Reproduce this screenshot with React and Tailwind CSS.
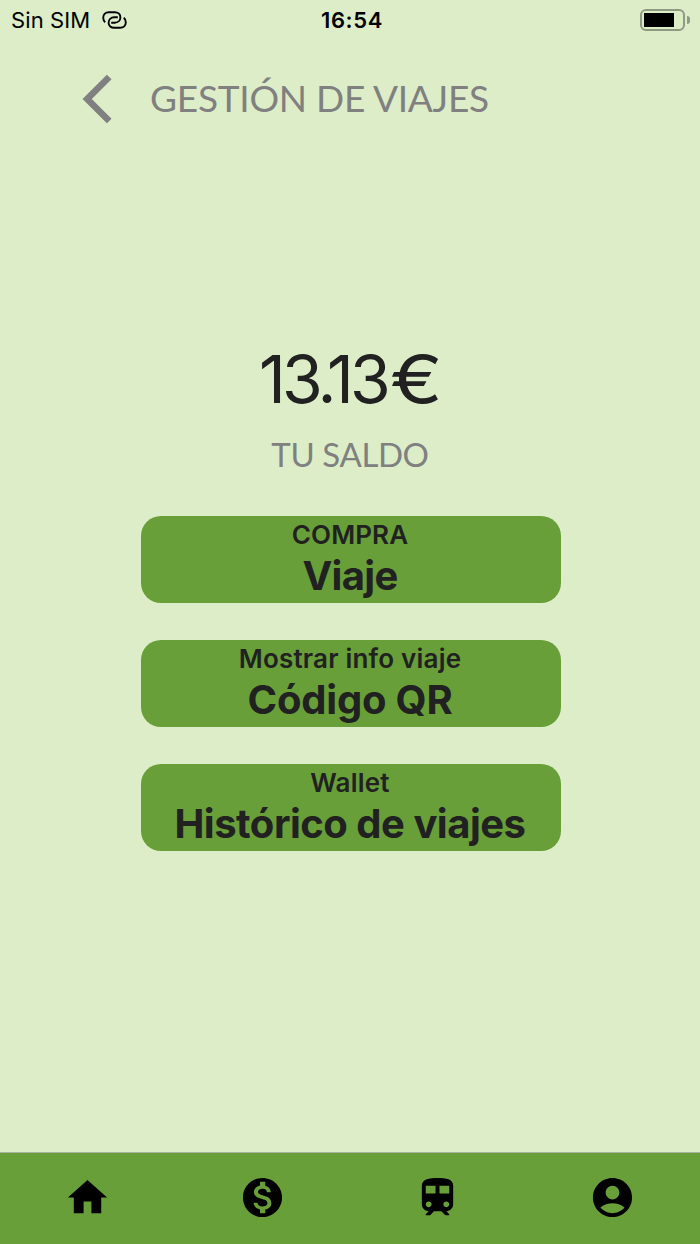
import { MdHome, MdMonetizationOn, MdTrain, MdAccountCircle } from 'react-icons/md';

const actions = [
  { label: 'COMPRA', title: 'Viaje', labelClass: 'tracking-[0.1px]', titleClass: 'tracking-[-0.7px]' },
  { label: 'Mostrar info viaje', title: 'Código QR', labelClass: 'tracking-[0.2px]', titleClass: 'tracking-[-0.2px]' },
  { label: 'Wallet', title: 'Histórico de viajes', labelClass: 'tracking-[0.2px]', titleClass: 'tracking-[-0.5px]' },
];

const tabs = [
  { name: 'Inicio', Icon: MdHome },
  { name: 'Saldo', Icon: MdMonetizationOn },
  { name: 'Viajes', Icon: MdTrain },
  { name: 'Perfil', Icon: MdAccountCircle },
];

const StatusBar = () => (
  <div className="grid h-[39px] shrink-0 grid-cols-3 items-center pl-[11px] pr-[10px] text-[22px] leading-[38px] text-black">
    <div className="flex items-center gap-3">
      <span className="whitespace-nowrap tracking-[0.1px]">Sin SIM</span>
      <svg className="h-[18px] w-[25px]" viewBox="0 0 25 18" fill="none" stroke="currentColor" strokeWidth="1.9" strokeLinecap="butt">
        <path d="M3.2 11.2C1.8 10 1.2 8.4 1.2 6.8C1.2 3.4 3.6 1.2 6.8 1.2H12.8C16 1.2 18.4 3.2 18.4 6.2C18.4 9.4 16 11.7 12.8 11.7H9.2" />
        <path d="M21.8 6.8C23.2 8 23.8 9.6 23.8 11.2C23.8 14.6 21.4 16.8 18.2 16.8H12.2C9 16.8 6.6 14.8 6.6 11.8C6.6 8.6 9 6.3 12.2 6.3H15.8" />
      </svg>
    </div>
    <span className="pl-[3px] text-center font-semibold tracking-[0.6px]">16:54</span>
    <div className="flex items-center justify-end gap-[2px]">
      <div className="h-[22px] w-[45px] rounded-[6px] border-2 border-[#8f9a82] p-[2px]">
        <div className="h-[14px] w-[30px] bg-black" />
      </div>
      <div className="h-2 w-[3px] rounded-r-full bg-[#8f9a82]" />
    </div>
  </div>
);

const Header = () => (
  <header className="flex h-[120px] shrink-0 items-center pl-[82px] text-[#808080]">
    <svg className="h-[50px] w-[30px]" viewBox="0 0 30 50" fill="none" stroke="currentColor" strokeWidth="6.6">
      <path d="M27.2 3L5.2 25L27.2 47" />
    </svg>
    <h1 className="-mt-[3px] ml-[38px] whitespace-nowrap font-[Lato] text-[37px] leading-[48px] tracking-[-0.25px]">
      GESTIÓN DE VIAJES
    </h1>
  </header>
);

const ActionButton = ({ label, title, labelClass, titleClass }) => (
  <button className="flex h-[87px] w-[420px] flex-col items-center rounded-[20px] bg-[#689f38] pr-[2px] pt-[3px] text-[#212121]">
    <span className={`text-[26px] font-semibold leading-[32px] ${labelClass}`}>{label}</span>
    <span className={`whitespace-nowrap text-[40px] font-bold leading-[50px] ${titleClass}`}>{title}</span>
  </button>
);

const TabBar = () => (
  <nav className="grid h-[92px] shrink-0 grid-cols-4 border-t border-[#aab29f] bg-[#689f38]">
    {tabs.map(({ name, Icon }) => (
      <button key={name} aria-label={name} className="flex items-center justify-center pb-[2px] text-black">
        <Icon className="size-[47px]" />
      </button>
    ))}
  </nav>
);

const App = () => {
  return (
    <div className="flex h-[1244px] w-[700px] flex-col bg-[#dcedc8] font-['Inter',sans-serif]">
      <StatusBar />
      <Header />
      <main className="flex flex-1 flex-col items-center pt-[178px]">
        <p className="flex h-[84px] pl-[2px] text-[66px] leading-[84px] text-[#212121]">
          <span className="tracking-[-3.8px]">13.13</span>
          <span className="ml-[3px] inline-block origin-left scale-x-[1.2] pr-[9px] text-[66px]">€</span>
        </p>
        <p className="mt-[12px] font-[Lato] text-[33px] leading-[42px] tracking-[-0.4px] text-[#808080]">TU SALDO</p>
        <div className="mt-[41px] flex flex-col gap-[37px] pl-[2px]">
          {actions.map((action) => (
            <ActionButton key={action.title} {...action} />
          ))}
        </div>
      </main>
      <TabBar />
    </div>
  );
};

export default App;
